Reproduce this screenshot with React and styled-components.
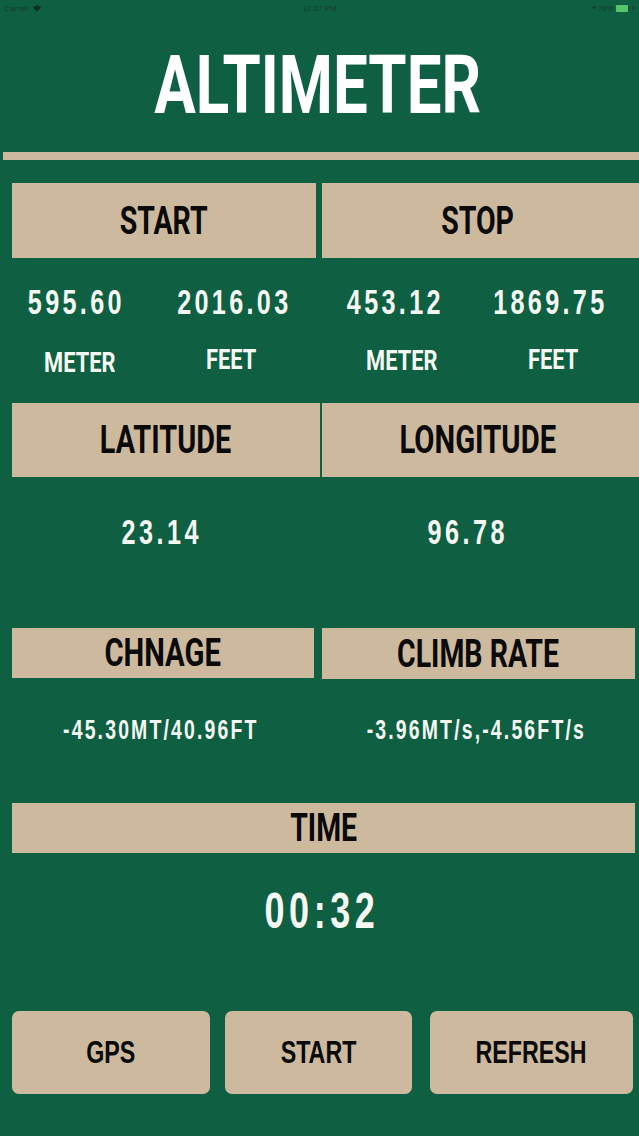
import React from "react";
import styled, { createGlobalStyle } from "styled-components";

const Global = createGlobalStyle`
  html, body { margin: 0; padding: 0; background: #0f6042; }
  body { font-family: Roboto, "Liberation Sans", sans-serif; }
`;

const Page = styled.div`
  width: 639px;
  height: 1136px;
  overflow: hidden;
  background: #0f6042;
`;

const StatusBar = styled.div`
  height: 16px;
  display: grid;
  grid-template-columns: 1fr auto 1fr;
  align-items: center;
  padding: 0 4px;
  font-family: "Liberation Sans", sans-serif;
  font-size: 8px;
  color: #143c2c;
`;

const StatusGroup = styled.div`
  display: flex;
  align-items: center;
  gap: ${(p) => (p.$end ? 2 : 5)}px;
  justify-content: ${(p) => (p.$end ? "flex-end" : "flex-start")};
`;

/* Narrow lettering: the installed families have no condensed cut */
const Squeeze = styled.span`
  display: inline-block;
  white-space: nowrap;
  transform: scaleX(${(p) => p.$x});
`;

const Title = styled.h1`
  margin: 19px 0 0;
  height: 100px;
  line-height: 100px;
  text-align: center;
  padding-right: 3px;
  font-size: 82px;
  font-weight: 700;
  color: #fff;
`;

const Divider = styled.div`
  margin: 17px 0 0 3px;
  height: 8px;
  background: #cdb99d;
`;

const Row = styled.div`
  display: grid;
  grid-template-columns: ${(p) => p.$cols};
  column-gap: ${(p) => p.$gap ?? 0}px;
  margin-top: ${(p) => p.$top}px;
  padding-left: 12px;
`;

const Header = styled.div`
  height: ${(p) => p.$h}px;
  display: flex;
  align-items: center;
  justify-content: center;
  padding-right: ${(p) => p.$inset ?? 0}px;
  background: #cdb99d;
  color: #0a0a0a;
  font-size: 38px;
  font-weight: 700;
`;

const Reading = styled.div`
  display: flex;
  justify-content: center;
  color: #f6f8f4;
  font-family: "Liberation Sans", sans-serif;
  font-weight: 700;
  line-height: 1;
  font-size: ${(p) => p.$size}px;
  letter-spacing: ${(p) => p.$track}px;
`;

const Unit = styled.div`
  text-align: center;
  color: #f6f8f4;
  font-weight: 700;
  line-height: 1;
  font-size: 28px;
  padding-top: ${(p) => p.$drop ?? 0}px;
`;

const ActionRow = styled.div`
  display: flex;
  margin-top: 75px;
  padding-left: 12px;
`;

const ActionButton = styled.button`
  width: ${(p) => p.$w}px;
  margin-left: ${(p) => p.$lead ?? 0}px;
  height: 83px;
  border: 0;
  padding: 0;
  border-radius: 7px;
  background: #cdb99d;
  color: #0a0a0a;
  font-family: "Liberation Sans", sans-serif;
  font-size: 31px;
  font-weight: 700;
`;

const Wifi = () => (
  <svg width="8" height="7" viewBox="0 0 10 8" fill="#102e22">
    <path d="M5 8 0 2.6C2.8-.4 7.2-.4 10 2.6z" />
  </svg>
);

const Arrow = () => (
  <svg width="5" height="6" viewBox="0 0 7 7" fill="#143c2c">
    <path d="M7 0 0 3.2h3.3L3.8 7z" />
  </svg>
);

const Battery = () => (
  <svg width="14" height="7" viewBox="0 0 14 7">
    <rect x="0" y="0" width="12" height="7" rx="1" fill="#57c46a" />
    <rect x="12.5" y="2" width="1" height="3" fill="#143c2c" />
  </svg>
);

const Bolt = () => (
  <svg width="3" height="6" viewBox="0 0 4 7" fill="#143c2c">
    <path d="M2.4 0 0 4h1.5L1.2 7 4 2.8H2.4z" />
  </svg>
);

const Head = ({ children, x = 0.75 }) => <Squeeze $x={x}>{children}</Squeeze>;
const Num = ({ children }) => <Squeeze $x={0.72}>{children}</Squeeze>;
const Word = ({ children }) => <Squeeze $x={0.78}>{children}</Squeeze>;

export default function App() {
  return (
    <Page>
      <Global />
      <StatusBar>
        <StatusGroup>
          <span>Carrier</span>
          <Wifi />
        </StatusGroup>
        <span>12:37 PM</span>
        <StatusGroup $end>
          <Arrow />
          <span>76%</span>
          <Battery />
          <Bolt />
        </StatusGroup>
      </StatusBar>

      <Title><Squeeze $x={0.754}>ALTIMETER</Squeeze></Title>
      <Divider />

      <Row $cols="304px 317px" $gap={6} $top={23}>
        <Header $h={75}><Head>START</Head></Header>
        <Header $h={75} $inset={5}><Head>STOP</Head></Header>
      </Row>
      <Row $cols="129px 186px 136px 174px" $top={26}>
        <Reading $size={35} $track={4.6}><Num>595.60</Num></Reading>
        <Reading $size={35} $track={4.6}><Num>2016.03</Num></Reading>
        <Reading $size={35} $track={4.6}><Num>453.12</Num></Reading>
        <Reading $size={35} $track={4.6}><Num>1869.75</Num></Reading>
      </Row>
      <Row $cols="136px 166px 176px 126px" $top={27}>
        <Unit $drop={3}><Word>METER</Word></Unit>
        <Unit><Word>FEET</Word></Unit>
        <Unit $drop={1}><Word>METER</Word></Unit>
        <Unit><Word>FEET</Word></Unit>
      </Row>

      <Row $cols="308px 317px" $gap={2} $top={26}>
        <Header $h={74} $inset={2}><Head x={0.76}>LATITUDE</Head></Header>
        <Header $h={74} $inset={5}><Head x={0.77}>LONGITUDE</Head></Header>
      </Row>
      <Row $cols="300px 311px" $top={37}>
        <Reading $size={35} $track={4.8}><Num>23.14</Num></Reading>
        <Reading $size={35} $track={4.8}><Num>96.78</Num></Reading>
      </Row>

      <Row $cols="302px 313px" $gap={8} $top={79}>
        <Header $h={50}><Head x={0.77}>CHNAGE</Head></Header>
        <Header $h={51}><Head>CLIMB RATE</Head></Header>
      </Row>
      <Row $cols="298px 333px" $top={38}>
        <Reading $size={27} $track={3}><Num>-45.30MT/40.96FT</Num></Reading>
        <Reading $size={27} $track={3}><Num>-3.96MT/s,-4.56FT/s</Num></Reading>
      </Row>

      <Row $cols="623px" $top={59}>
        <Header $h={50}><Head>TIME</Head></Header>
      </Row>
      <Row $cols="620px" $top={33}>
        <Reading $size={50} $track={6.4}><Num>00:32</Num></Reading>
      </Row>

      <ActionRow>
        <ActionButton $w={198}><Head>GPS</Head></ActionButton>
        <ActionButton $w={187} $lead={15}><Head>START</Head></ActionButton>
        <ActionButton $w={203} $lead={18}><Head>REFRESH</Head></ActionButton>
      </ActionRow>
    </Page>
  );
}
